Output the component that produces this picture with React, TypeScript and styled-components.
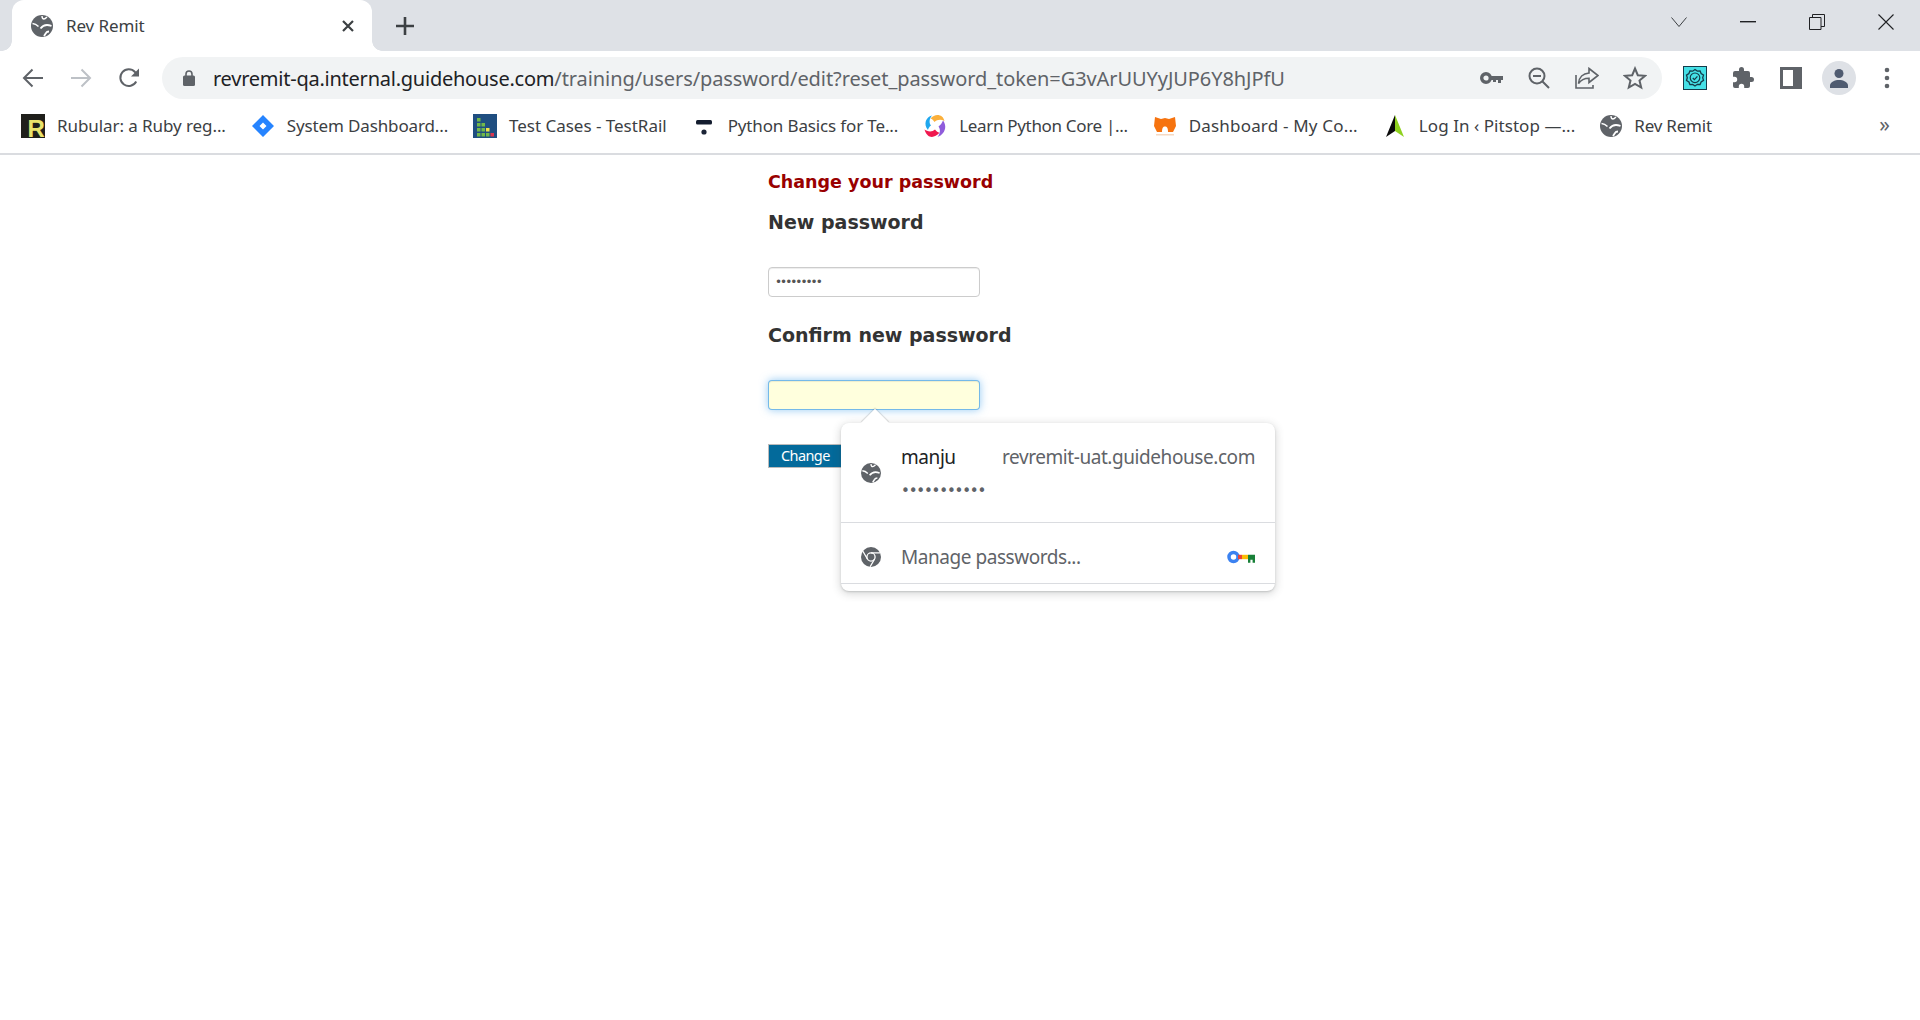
import React from "react";
import styled, { createGlobalStyle } from "styled-components";

const Global = createGlobalStyle`
  html, body { margin: 0; padding: 0; background: #fff; overflow: hidden; }
  body { font-family: "Noto Sans", "Open Sans", sans-serif; }
`;

const Window = styled.div`
  width: 1920px;
  height: 1020px;
  display: flex;
  flex-direction: column;
  overflow: hidden;
`;

const TabStrip = styled.div`
  height: 51px;
  flex: none;
  background: #dee1e6;
  display: flex;
  align-items: flex-end;
  padding-left: 12px;
`;

const Tab = styled.div`
  position: relative;
  width: 360px;
  height: 51px;
  background: #fff;
  border-radius: 12px 12px 0 0;
  display: flex;
  align-items: center;
  padding: 0 18px 0 19px;
  box-sizing: border-box;
  color: #3c4043;
  font-size: 17px;
  letter-spacing: -0.1px;
  &::before, &::after {
    content: "";
    position: absolute;
    bottom: 0;
    width: 10px;
    height: 10px;
    background: radial-gradient(circle at var(--cx) 0, #dee1e6 9.5px, #fff 10px);
  }
  &::before { left: -10px; --cx: 0; }
  &::after { right: -10px; --cx: 100%; }
`;

const TabTitle = styled.span`
  margin-left: 13px;
  flex: 1;
`;

const NewTab = styled.div`
  width: 24px;
  height: 51px;
  margin-left: 21px;
  display: flex;
  align-items: center;
  justify-content: center;
`;

const WindowControls = styled.div`
  margin-left: auto;
  height: 51px;
  display: flex;
  align-items: flex-start;
`;

const WindowButton = styled.div`
  width: 69px;
  height: 44px;
  display: flex;
  align-items: center;
  justify-content: center;
`;

const Toolbar = styled.div`
  height: 48px;
  flex: none;
  background: #fff;
  display: flex;
  align-items: center;
  padding-left: 9px;
`;

const IconBox = styled.div`
  width: 48px;
  height: 42px;
  flex: none;
  display: flex;
  align-items: center;
  justify-content: center;
`;

const Omnibox = styled.div`
  width: 1500px;
  height: 42px;
  margin: 6px 9px 0;
  flex: none;
  border-radius: 21px;
  background: #f1f3f4;
  display: flex;
  align-items: center;
  padding: 0 3px 0 21px;
  box-sizing: border-box;
`;

const Url = styled.div`
  margin-left: 18px;
  font-size: 20px;
  letter-spacing: -0.08px;
  color: #5f6368;
  white-space: nowrap;
  flex: 1;
`;

const Domain = styled.span`
  color: #202124;
  letter-spacing: -0.24px;
`;

const OmniIcons = styled.div`
  display: flex;
  flex: none;
`;

const ToolGroup = styled.div`
  display: flex;
  margin-top: 6px;
`;

const AvatarCircle = styled.div`
  width: 34px;
  height: 34px;
  border-radius: 50%;
  background: #dee1e6;
  display: flex;
  align-items: center;
  justify-content: center;
`;

const Bookmarks = styled.div`
  height: 54px;
  flex: none;
  box-sizing: content-box;
  border-bottom: 2px solid #dadce0;
  display: flex;
  align-items: center;
  padding: 0 21px;
  gap: 25px;
  position: relative;
`;

const Bookmark = styled.div`
  display: flex;
  align-items: center;
  gap: 12px;
`;

const BookmarkLabel = styled.span<{ $ls: number }>`
  font-size: 17px;
  letter-spacing: ${(p) => p.$ls}px;
  color: #3c4043;
  white-space: nowrap;
  padding-bottom: 2px;
`;

const More = styled.div`
  margin-left: auto;
  margin-right: 9px;
  font-size: 21px;
  color: #5f6368;
  line-height: 1;
  margin-top: -4px;
`;

const Page = styled.main`
  position: relative;
  flex: 1;
  padding: 15px 0 0 768px;
  display: flex;
  flex-direction: column;
  align-items: flex-start;
  font-family: "DejaVu Sans", Verdana, sans-serif;
`;

const Title = styled.h1`
  margin: 0;
  font-size: 17.5px;
  line-height: 24px;
  font-weight: 700;
  color: #990000;
`;

const Label = styled.label`
  margin-top: 16px;
  font-size: 19px;
  line-height: 24px;
  font-weight: 700;
  color: #333;
  & + input { margin-top: 33px; }
  input + & { margin-top: 26px; }
`;

const Field = styled.input<{ $focused?: boolean }>`
  width: 212px;
  height: 30px;
  box-sizing: border-box;
  padding: 0 6px;
  border-radius: 4px;
  font-size: 12px;
  letter-spacing: -2px;
  font-family: "DejaVu Sans", sans-serif;
  color: #555;
  outline: none;
  border: 1px solid ${(p) => (p.$focused ? "rgba(82,168,236,.8)" : "#ccc")};
  background: ${(p) => (p.$focused ? "#ffffdd" : "#fff")};
  box-shadow: ${(p) =>
    p.$focused
      ? "inset 0 1px 1px rgba(0,0,0,.075), 0 0 8px rgba(82,168,236,.6)"
      : "inset 0 1px 1px rgba(0,0,0,.075)"};
`;

const Submit = styled.button`
  margin-top: 34px;
  width: 88px;
  height: 24px;
  box-sizing: border-box;
  padding: 0 0 2px 12px;
  text-align: left;
  background: #036a9b;
  color: #fff;
  border: 1px solid #bbb;
  font-family: "Noto Sans", sans-serif;
  font-size: 14.5px;
  letter-spacing: -0.6px;
  line-height: 20px;
`;

const Popup = styled.div`
  position: absolute;
  left: 841px;
  top: 268px;
  width: 434px;
  height: 168px;
  background: #fff;
  border-radius: 8px;
  box-shadow: 0 1px 2px rgba(60,64,67,.2), 0 2px 8px 1px rgba(60,64,67,.2);
  display: flex;
  flex-direction: column;
  font-family: "Noto Sans", sans-serif;
  &::before {
    content: "";
    position: absolute;
    left: 24px;
    top: -10px;
    width: 20px;
    height: 20px;
    background: #fff;
    transform: rotate(45deg);
    box-shadow: -1px -1px 1px rgba(60,64,67,.18);
  }
`;

const PopupRow = styled.div<{ $h: number; $pt: number }>`
  position: relative;
  height: ${(p) => p.$h}px;
  flex: none;
  box-sizing: border-box;
  padding: ${(p) => p.$pt}px 20px 0 20px;
  display: flex;
  align-items: center;
  gap: 20px;
  border-bottom: 1px solid #dadce0;
`;

const Credential = styled.div`
  flex: 1;
  display: flex;
  flex-direction: column;
  gap: 15px;
  padding-bottom: 2px;
`;

const CredentialLine = styled.div`
  display: flex;
  justify-content: space-between;
  font-size: 19px;
  letter-spacing: -0.43px;
  line-height: 24px;
`;

const User = styled.span`
  color: #202124;
`;

const Site = styled.span`
  color: #5f6368;
`;

const Dots = styled.div`
  font-size: 15px;
  line-height: 14px;
  letter-spacing: -1.2px;
  color: #5f6368;
  font-family: "DejaVu Sans", sans-serif;
`;

const Manage = styled.span`
  flex: 1;
  font-size: 19px;
  letter-spacing: -0.45px;
  color: #5f6368;
`;

const PopupFooter = styled.div`
  flex: 1;
`;

const GlobeIcon = ({ s = 22 }: { s?: number }) => (
  <svg width={s} height={s} viewBox="0 0 22 22" style={{ flex: "none" }}>
    <circle cx="11" cy="11" r="11" fill="#5f6368" />
    <path d="M1.500 8.500c3 .2 4.500 1.500 6 3" fill="none" stroke="#fff" strokeWidth="1.600" />
    <path d="M9.500 13.500c1.500-2 4-3.500 6.500-3.500s3 .5 4.500 1" fill="none" stroke="#fff" strokeWidth="1.800" />
    <path d="M13 21l2-3c.5-1 1.500-1.500 3-1.500" fill="none" stroke="#fff" strokeWidth="1.800" />
    <path d="M11 1c0 2 1 3 2 3s2-1 3-2" fill="none" stroke="#fff" strokeWidth="1.400" />
  </svg>
);

const ChromeIcon = () => (
  <svg width="20" height="20" viewBox="0 0 20 20" style={{ flex: "none" }}>
    <circle cx="10" cy="10" r="10" fill="#5f6368" />
    <circle cx="10" cy="10" r="4.100" fill="none" stroke="#fff" strokeWidth="1.300" />
    <path d="M10 5.900h9M13.600 12l-4.500 7.800M6.400 12 1.900 4.200" stroke="#fff" strokeWidth="1.300" fill="none" />
  </svg>
);

const RubularSvg = styled.svg`
  overflow: visible;
  flex: none;
`;

const RubularIcon = () => (
  <RubularSvg width="24" height="24" viewBox="0 0 24 24">
    <rect width="24" height="24" fill="#1f1f1b" />
    <text x="6.500" y="23" fontFamily="Liberation Sans, sans-serif" fontWeight="700" fontSize="24" fill="#e9e36b">R</text>
  </RubularSvg>
);

const JiraIcon = () => (
  <svg width="24" height="24" viewBox="0 0 24 24">
    <path d="M12 1 23 12 12 23 1 12Z M12 8.500 8.500 12 12 15.500 15.500 12Z" fill="#2684ff" fillRule="evenodd" />
  </svg>
);

const TestRailIcon = () => (
  <svg width="24" height="24" viewBox="0 0 24 24">
    <rect width="24" height="24" fill="#1f4e80" />
    <rect x="4" y="4" width="3.500" height="3.500" fill="#72b84a" />
    <rect x="4" y="9" width="3.500" height="3.500" fill="#72b84a" />
    <rect x="8.500" y="9" width="3.500" height="3.500" fill="#72b84a" />
    <rect x="4" y="14" width="3.500" height="3.500" fill="#72b84a" />
    <rect x="8.500" y="14" width="3.500" height="3.500" fill="#72b84a" />
    <rect x="13" y="14" width="3.500" height="3.500" fill="#f1e14b" />
    <rect x="4" y="19" width="3.500" height="3.500" fill="#72b84a" />
    <rect x="8.500" y="19" width="3.500" height="3.500" fill="#72b84a" />
    <rect x="13" y="19" width="3.500" height="3.500" fill="#72b84a" />
    <rect x="17.500" y="19" width="3.500" height="3.500" fill="#d9364f" />
  </svg>
);

const PythonBasicsIcon = () => (
  <svg width="24" height="24" viewBox="0 0 24 24">
    <rect x="4" y="6" width="16" height="4.500" rx="1.500" fill="#131c2e" />
    <circle cx="12" cy="18" r="2.600" fill="#1b2436" />
  </svg>
);

const SwirlIcon = () => (
  <svg width="24" height="24" viewBox="0 0 24 24">
    <path d="M5 16C0 10 3 3 9 1.500 6 5 6 9 8 11.500 6.500 12.500 5.500 14 5 16Z" fill="#1fa7ee" />
    <path d="M7.500 4.500C12 -1 20 0 21.500 7 18 5 14 5.500 11.500 8 10.500 6.500 9.500 5 7.500 4.500Z" fill="#fbb03b" />
    <path d="M20 6.500C25 13 21 21 14.500 23 17.500 19 17.500 15 15.500 12.500 17.500 11 19 9 20 6.500Z" fill="#8f5cdb" />
    <path d="M1.500 15.500C4 17.500 9 18.500 12 15.500 13 17 14.500 18 16.500 18.800 11 25 4 24.500 1.500 15.500Z" fill="#f0184f" />
  </svg>
);

const FoxIcon = () => (
  <svg width="24" height="24" viewBox="0 0 24 24">
    <path d="M2 3 8 5 12 4 16 5 22 3 23 12 20 18H15C15 14 14 12.500 12 12.500S9 14 9 18H4L1 12Z" fill="#f6730f" />
    <rect x="3" y="20" width="18" height="1.500" fill="#f6d9c2" />
  </svg>
);

const PitstopIcon = () => (
  <svg width="24" height="24" viewBox="0 0 24 24">
    <path d="M12 1 3 23 12 17Z" fill="#0a0a0a" />
    <path d="M12 1 21 23 12 17Z" fill="#8fd11f" />
  </svg>
);

const Back = ({ c }: { c: string }) => (
  <svg width="22" height="22" viewBox="0 0 22 22" fill="none" stroke={c} strokeWidth="2">
    <path d="M21 11H2M10.500 2.500 2 11l8.500 8.500" />
  </svg>
);

const Forward = ({ c }: { c: string }) => (
  <svg width="22" height="22" viewBox="0 0 22 22" fill="none" stroke={c} strokeWidth="2">
    <path d="M1 11h19M11.500 2.500 20 11l-8.500 8.500" />
  </svg>
);

const Reload = () => (
  <svg width="22" height="22" viewBox="0 0 22 22" fill="none">
    <path d="M18.200 14.500A8.400 8.400 0 1 1 17 5l2 2" stroke="#5f6368" strokeWidth="2" />
    <path d="M21 1.500v8h-8z" fill="#5f6368" />
  </svg>
);

const Lock = () => (
  <svg width="12" height="16" viewBox="0 0 12 16" style={{ flex: "none" }}>
    <path d="M3 6V4a3 3 0 0 1 6 0v2" fill="none" stroke="#5f6368" strokeWidth="1.600" />
    <rect y="5.500" width="12" height="10.500" rx="1.500" fill="#5f6368" />
  </svg>
);

const KeyIcon = () => (
  <svg width="23" height="12" viewBox="0 0 23 12">
    <circle cx="6" cy="6" r="4.300" fill="none" stroke="#5f6368" strokeWidth="3.400" />
    <path d="M10 4h13v4h-2v3h-3V8h-2v2h-3V8h-3z" fill="#5f6368" />
  </svg>
);

const ZoomOut = () => (
  <svg width="22" height="22" viewBox="0 0 22 22" fill="none" stroke="#5f6368" strokeWidth="2">
    <circle cx="9" cy="9" r="7.500" />
    <path d="M5 9h8M14.500 14.500 21 21" />
  </svg>
);

const Share = () => (
  <svg width="24" height="22" viewBox="0 0 24 22" fill="none" stroke="#5f6368" strokeWidth="1.600">
    <path d="M14 1.500 23 8.500l-9 7v-4.300c-5 0-8 1.500-10.500 5.300C4 10.500 8 6.500 14 6Z" />
    <path d="M1 8v13h17v-3" />
  </svg>
);

const Star = () => (
  <svg width="24" height="24" viewBox="0 0 24 24" fill="none" stroke="#5f6368" strokeWidth="2">
    <path d="M12 2.500 14.800 9.200 22 9.800 16.500 14.500 18.200 21.500 12 17.800 5.800 21.500 7.500 14.500 2 9.800 9.200 9.200Z" />
  </svg>
);

const ExtensionBadge = () => (
  <svg width="24" height="24" viewBox="0 0 24 24">
    <rect x=".5" y=".5" width="23" height="23" fill="#45e0e6" stroke="#143b4a" />
    <path d="M12 3.500l2.300 1.600 2.800-.2 1 2.600 2.400 1.500-.8 2.700.8 2.700-2.400 1.500-1 2.600-2.800-.2L12 20l-2.300-1.600-2.800.2-1-2.600-2.400-1.500.8-2.700-.8-2.700 2.400-1.500 1-2.600 2.800.2z" fill="none" stroke="#143b4a" strokeWidth="1.300" />
    <circle cx="12" cy="11.800" r="4.800" fill="none" stroke="#143b4a" strokeWidth="1.200" />
    <path d="M9.800 12l1.600 1.600 3-3.200" fill="none" stroke="#143b4a" strokeWidth="1.300" />
  </svg>
);

const Puzzle = () => (
  <svg width="24" height="24" viewBox="0 0 24 24">
    <path d="M20.500 11H19V7a2 2 0 0 0-2-2h-4V3.500a2.500 2.500 0 0 0-5 0V5H4a2 2 0 0 0-2 2v3.800h1.500a2.700 2.700 0 0 1 0 5.400H2V20a2 2 0 0 0 2 2h3.800v-1.500a2.700 2.700 0 0 1 5.400 0V22H17a2 2 0 0 0 2-2v-4h1.500a2.500 2.500 0 0 0 0-5z" fill="#5f6368" />
  </svg>
);

const SidePanel = () => (
  <svg width="22" height="22" viewBox="0 0 22 22">
    <path d="M0 0h22v22H0zM3 3v16h10V3z" fill="#5f6368" fillRule="evenodd" />
  </svg>
);

const Person = () => (
  <svg width="22" height="22" viewBox="0 0 22 22">
    <circle cx="11" cy="6.500" r="4.500" fill="#4f5b70" />
    <path d="M2 21v-2.500C2 15 7 13 11 13s9 2 9 5.500V21z" fill="#4f5b70" />
  </svg>
);

const Kebab = () => (
  <svg width="6" height="22" viewBox="0 0 6 22">
    <circle cx="3" cy="3" r="2.300" fill="#5f6368" />
    <circle cx="3" cy="11" r="2.300" fill="#5f6368" />
    <circle cx="3" cy="19" r="2.300" fill="#5f6368" />
  </svg>
);

const ColorKey = () => (
  <svg width="28" height="14" viewBox="0 0 28 14" style={{ flex: "none" }}>
    <circle cx="6.500" cy="7" r="4.500" fill="none" stroke="#3b82f1" strokeWidth="3.500" />
    <rect x="11" y="4.800" width="4" height="4.400" fill="#ea4335" />
    <rect x="15" y="4.800" width="6" height="4.400" fill="#fbbc04" />
    <path d="M21 4.800h7v8h-2.400v-3h-2.200v3H21z" fill="#188038" />
  </svg>
);

const bookmarks: { label: string; ls: number; icon: React.ReactNode }[] = [
  { label: "Rubular: a Ruby reg...", ls: -0.08, icon: <RubularIcon /> },
  { label: "System Dashboard...", ls: -0.14, icon: <JiraIcon /> },
  { label: "Test Cases - TestRail", ls: -0.02, icon: <TestRailIcon /> },
  { label: "Python Basics for Te...", ls: -0.14, icon: <PythonBasicsIcon /> },
  { label: "Learn Python Core |...", ls: -0.32, icon: <SwirlIcon /> },
  { label: "Dashboard - My Co...", ls: 0.18, icon: <FoxIcon /> },
  { label: "Log In ‹ Pitstop —...", ls: 0.05, icon: <PitstopIcon /> },
  { label: "Rev Remit", ls: -0.2, icon: <GlobeIcon /> },
];

export default function App() {
  return (
    <Window>
      <Global />
      <TabStrip>
        <Tab>
          <GlobeIcon />
          <TabTitle>Rev Remit</TabTitle>
          <svg width="12" height="12" viewBox="0 0 12 12" stroke="#3c4043" strokeWidth="2.200">
            <path d="M1 1l10 10M11 1 1 11" />
          </svg>
        </Tab>
        <NewTab>
          <svg width="18" height="18" viewBox="0 0 18 18" stroke="#3c4043" strokeWidth="2.600">
            <path d="M9 0v18M0 9h18" />
          </svg>
        </NewTab>
        <WindowControls>
          <WindowButton>
            <svg width="16" height="10" viewBox="0 0 16 10" fill="none" stroke="#3c4043" strokeWidth="1">
              <path d="M.5.500 8 9.500 15.500.500" />
            </svg>
          </WindowButton>
          <WindowButton>
            <svg width="16" height="2" viewBox="0 0 16 2"><rect width="16" height="1.400" fill="#202124" /></svg>
          </WindowButton>
          <WindowButton>
            <svg width="16" height="16" viewBox="0 0 16 16" fill="none" stroke="#202124" strokeWidth="1">
              <path d="M.5 3.500h11.500v12H.5zM3.500 3.500V.5h12v12H12" />
            </svg>
          </WindowButton>
          <WindowButton>
            <svg width="16" height="16" viewBox="0 0 16 16" stroke="#202124" strokeWidth="1.100">
              <path d="M.5.500l15 15M15.500.500l-15 15" />
            </svg>
          </WindowButton>
        </WindowControls>
      </TabStrip>
      <Toolbar>
        <ToolGroup>
          <IconBox><Back c="#5f6368" /></IconBox>
          <IconBox><Forward c="#bdc1c6" /></IconBox>
          <IconBox><Reload /></IconBox>
        </ToolGroup>
        <Omnibox>
          <Lock />
          <Url>
            <Domain>revremit-qa.internal.guidehouse.com</Domain>
            /training/users/password/edit?reset_password_token=G3vArUUYyJUP6Y8hJPfU
          </Url>
          <OmniIcons>
            <IconBox><KeyIcon /></IconBox>
            <IconBox><ZoomOut /></IconBox>
            <IconBox><Share /></IconBox>
            <IconBox><Star /></IconBox>
          </OmniIcons>
        </Omnibox>
        <ToolGroup>
          <IconBox><ExtensionBadge /></IconBox>
          <IconBox><Puzzle /></IconBox>
          <IconBox><SidePanel /></IconBox>
          <IconBox><AvatarCircle><Person /></AvatarCircle></IconBox>
          <IconBox><Kebab /></IconBox>
        </ToolGroup>
      </Toolbar>
      <Bookmarks>
        {bookmarks.map((b) => (
          <Bookmark key={b.label}>
            {b.icon}
            <BookmarkLabel $ls={b.ls}>{b.label}</BookmarkLabel>
          </Bookmark>
        ))}
        <More>»</More>
      </Bookmarks>
      <Page>
        <Title>Change your password</Title>
        <Label>New password</Label>
        <Field type="password" readOnly value="123456789" />
        <Label>Confirm new password</Label>
        <Field $focused readOnly />
        <Submit>Change</Submit>
        <Popup>
          <PopupRow $h={100} $pt={0}>
            <GlobeIcon s={20} />
            <Credential>
              <CredentialLine>
                <User>manju</User>
                <Site>revremit-uat.guidehouse.com</Site>
              </CredentialLine>
              <Dots>•••••••••••</Dots>
            </Credential>
          </PopupRow>
          <PopupRow $h={61} $pt={8}>
            <ChromeIcon />
            <Manage>Manage passwords...</Manage>
            <ColorKey />
          </PopupRow>
          <PopupFooter />
        </Popup>
      </Page>
    </Window>
  );
}
